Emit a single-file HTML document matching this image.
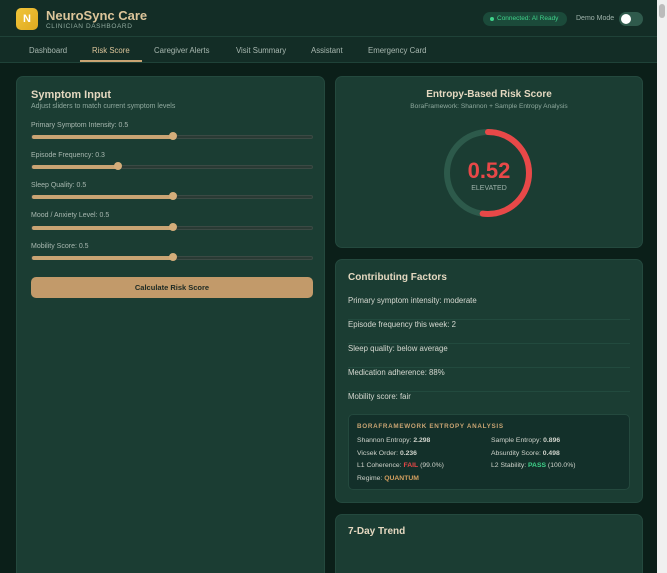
<!DOCTYPE html>
<html><head><style>
*{box-sizing:border-box;margin:0;padding:0}
html,body{width:667px;height:573px;overflow:hidden}
body{background:#0b1f19;font-family:"Liberation Sans",sans-serif;position:relative}
.hdr{position:absolute;left:0;top:0;width:657px;height:37px;background:#132d26;border-bottom:1px solid #1f4238}
.logo{position:absolute;left:16px;top:8px;width:22px;height:22px;border-radius:5px;background:linear-gradient(135deg,#f0c53a,#e0a920);color:#fff;font-weight:bold;font-size:11px;text-align:center;line-height:22px}
.t1{position:absolute;left:46px;top:8px;color:#dcc59a;font-weight:bold;font-size:13px}
.t2{position:absolute;left:46px;top:23px;color:#8fa99e;font-size:6.5px;letter-spacing:.6px}
.conn{position:absolute;left:483px;top:12px;width:84px;height:14px;border-radius:7px;background:#1b4a3a;color:#3fd28a;font-size:6.5px;line-height:14px;padding-left:14px}
.conn:before{content:"";position:absolute;left:7px;top:5px;width:4px;height:4px;border-radius:50%;background:#3fd28a}
.dm{position:absolute;left:576px;top:15px;color:#9fb3ab;font-size:7px}
.tog{position:absolute;left:619px;top:12px;width:24px;height:14px;border-radius:7px;background:#2f5a4c}
.tog:after{content:"";position:absolute;left:2px;top:2px;width:10px;height:10px;border-radius:50%;background:#fff}
.nav{position:absolute;left:0;top:37px;width:657px;height:26px;background:#132d26;border-bottom:1px solid #1f4238}
.nav span{position:absolute;top:9px;font-size:7.8px;color:#a8b8b0}
.nav .act{color:#dcc59a}
.ul{position:absolute;left:80px;top:60px;width:62px;height:2px;background:#c9a473}
.card{position:absolute;background:#1b3d33;border:1px solid #24493e;border-radius:7px}
.h{color:#e4d8c0;font-weight:bold}
.lbl{position:absolute;left:14px;font-size:7px;color:#a8b8b0}
.sl{position:absolute;left:14px;width:282px;height:4px;border-radius:2px;background:#2a3a34;border:1px solid #3b4a44}
.sl i{position:absolute;left:0;top:-1px;height:4px;border-radius:2px;background:#c9a473}
.sl b{position:absolute;top:-4px;width:8px;height:8px;border-radius:50%;background:#d4ad7a}
.btn{position:absolute;left:14px;top:200px;width:282px;height:21px;border-radius:5px;background:#c29a6a;color:#1d2a24;font-weight:bold;font-size:7.5px;text-align:center;line-height:21px}
.f{position:absolute;left:12px;width:282px;font-size:7.8px;color:#d5d8d0;border-bottom:1px solid #224a3e;height:24px}
.box{position:absolute;left:12px;top:154px;width:282px;height:76px;background:#13302a;border:1px solid #24493e;border-radius:5px;font-size:6.8px;color:#cfd3cb}
.box div{position:absolute}
</style></head><body>
<div class="hdr"><div class="logo">N</div><div class="t1">NeuroSync Care</div><div class="t2">CLINICIAN DASHBOARD</div>
<div class="conn">Connected: AI Ready</div><div class="dm">Demo Mode</div><div class="tog"></div></div>
<div class="nav"><span style="left:29px">Dashboard</span><span class="act" style="left:92px">Risk Score</span><span style="left:154px">Caregiver Alerts</span><span style="left:236px">Visit Summary</span><span style="left:311px">Assistant</span><span style="left:368px">Emergency Card</span></div>
<div class="ul"></div>

<div class="card" style="left:16px;top:76px;width:309px;height:520px">
<div class="h" style="position:absolute;left:14px;top:12px;font-size:11px">Symptom Input</div>
<div class="lbl" style="top:26px;color:#8fa99e">Adjust sliders to match current symptom levels</div>
<div class="lbl" style="top:45px">Primary Symptom Intensity: 0.5</div><div class="sl" style="top:58px"><i style="width:141px"></i><b style="left:137px"></b></div>
<div class="lbl" style="top:75px">Episode Frequency: 0.3</div><div class="sl" style="top:88px"><i style="width:86px"></i><b style="left:82px"></b></div>
<div class="lbl" style="top:105px">Sleep Quality: 0.5</div><div class="sl" style="top:118px"><i style="width:141px"></i><b style="left:137px"></b></div>
<div class="lbl" style="top:135px">Mood / Anxiety Level: 0.5</div><div class="sl" style="top:149px"><i style="width:141px"></i><b style="left:137px"></b></div>
<div class="lbl" style="top:166px">Mobility Score: 0.5</div><div class="sl" style="top:179px"><i style="width:141px"></i><b style="left:137px"></b></div>
<div class="btn">Calculate Risk Score</div>
</div>

<div class="card" style="left:335px;top:76px;width:308px;height:172px">
<div class="h" style="position:absolute;left:0;width:100%;text-align:center;top:12px;font-size:10px">Entropy-Based Risk Score</div>
<div style="position:absolute;left:0;width:100%;text-align:center;top:26px;font-size:6.6px;color:#8fa99e">BoraFramework: Shannon + Sample Entropy Analysis</div>
<div style="position:absolute;left:106px;top:50px;width:92px;height:92px"><svg width="92" height="92"><circle cx="46" cy="46" r="41" fill="none" stroke="#2d5a4b" stroke-width="6"/><circle cx="46" cy="46" r="41" fill="none" stroke="#e84848" stroke-width="6" stroke-dasharray="134 300" transform="rotate(-90 46 46)" stroke-linecap="round"/></svg></div>
<div style="position:absolute;left:0;width:100%;text-align:center;top:81px;font-size:22px;font-weight:bold;color:#e84848">0.52</div>
<div style="position:absolute;left:0;width:100%;text-align:center;top:108px;font-size:7px;color:#9fb3ab">ELEVATED</div>
</div>

<div class="card" style="left:335px;top:259px;width:308px;height:244px">
<div class="h" style="position:absolute;left:12px;top:12px;font-size:10px">Contributing Factors</div>
<div class="f" style="top:36px">Primary symptom intensity: moderate</div>
<div class="f" style="top:60px">Episode frequency this week: 2</div>
<div class="f" style="top:84px">Sleep quality: below average</div>
<div class="f" style="top:108px">Medication adherence: 88%</div>
<div class="f" style="top:132px;border:0">Mobility score: fair</div>
<div class="box">
<div style="left:8px;top:8px;font-size:6.3px;font-weight:bold;color:#c9a473;letter-spacing:.7px">BORAFRAMEWORK ENTROPY ANALYSIS</div>
<div style="left:8px;top:22px">Shannon Entropy: <b>2.298</b></div><div style="left:142px;top:22px">Sample Entropy: <b>0.896</b></div>
<div style="left:8px;top:35px">Vicsek Order: <b>0.236</b></div><div style="left:142px;top:35px">Absurdity Score: <b>0.498</b></div>
<div style="left:8px;top:47px">L1 Coherence: <b style="color:#e84848">FAIL</b> (99.0%)</div><div style="left:142px;top:47px">L2 Stability: <b style="color:#3fd28a">PASS</b> (100.0%)</div>
<div style="left:8px;top:60px">Regime: <b style="color:#d4a060">QUANTUM</b></div>
</div></div>

<div class="card" style="left:335px;top:514px;width:308px;height:80px">
<div class="h" style="position:absolute;left:12px;top:11px;font-size:10px">7-Day Trend</div></div>
<div style="position:absolute;left:657px;top:0;width:10px;height:573px;background:#f0f0f0"><div style="position:absolute;left:2px;top:4px;width:6px;height:14px;background:#bbb;border-radius:3px"></div></div>
</body></html>
